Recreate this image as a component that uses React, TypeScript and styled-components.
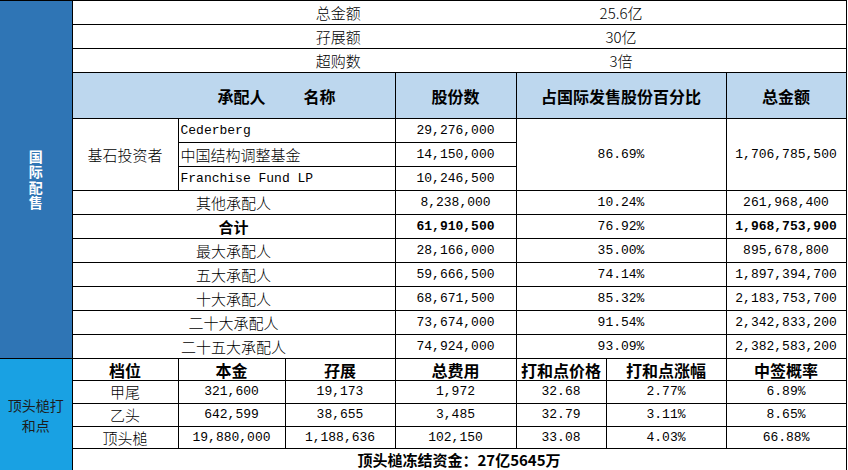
import React from "react";
import styled, { createGlobalStyle } from "styled-components";

const GlobalStyle = createGlobalStyle`
  html, body {
    margin: 0;
    padding: 0;
    background: #fff;
  }
  body {
    font-family: "Noto Sans CJK SC", "Noto Sans", sans-serif;
  }
`;

const Sheet = styled.table`
  width: 846px;
  table-layout: fixed;
  border-collapse: collapse;
  color: #000;
  font-family: "Noto Sans CJK SC", sans-serif;
  font-size: 15px;
  font-weight: 300;
`;

const Row = styled.tr<{ $h: number }>`
  height: ${(p) => p.$h}px;
`;

const Cell = styled.td<{ $left?: boolean; $bold?: boolean; $mono?: boolean }>`
  border: 1px solid #000;
  padding: 0 2px;
  text-align: ${(p) => (p.$left ? "left" : "center")};
  vertical-align: middle;
  white-space: nowrap;
  line-height: 18px;
  font-family: ${(p) =>
    p.$mono ? `"Liberation Mono", "Noto Sans CJK SC", monospace` : "inherit"};
  font-size: ${(p) => (p.$mono ? "13px" : "15px")};
  font-weight: ${(p) => (p.$bold ? 700 : "inherit")};
`;

// top summary rows have no inner vertical lines
const SummaryLabel = styled(Cell)`
  border-right: none;
  padding-left: 90px;
`;

const SummaryValue = styled(Cell)`
  border-left: none;
  border-right: none;
`;

const SummaryEnd = styled(Cell)`
  border-left: none;
`;

const HeadCell = styled.th<{ $pad?: number }>`
  border: 1px solid #000;
  background: #bdd7ee;
  padding: 0 0 0 ${(p) => p.$pad ?? 0}px;
  font-size: 16px;
  font-weight: 700;
  text-align: center;
  vertical-align: middle;
  white-space: nowrap;
`;

const HeadPair = styled.div`
  display: flex;
  justify-content: center;
  gap: 38px;
`;

const SubHead = styled(Cell)`
  font-size: 16px;
  font-weight: 700;
`;

const SideCell = styled.td<{ $tone: "dark" | "light" }>`
  border: 1px solid #000;
  border-left: none;
  padding: 0;
  background: ${(p) => (p.$tone === "dark" ? "#2f75b5" : "#19a1e3")};
  color: ${(p) => (p.$tone === "dark" ? "#fff" : "#1d1d1d")};
  text-align: center;
  vertical-align: middle;
`;

const StackLabel = styled.div`
  margin: 0 auto;
  width: 1em;
  font-size: 14px;
  line-height: 15.5px;
  font-weight: 700;
  word-break: break-all;
`;

const WrapLabel = styled.div`
  margin: 0 auto;
  width: 58px;
  font-size: 14px;
  line-height: 20px;
  font-weight: 400;
  word-break: break-all;
`;

const FootCell = styled(Cell)`
  font-size: 15px;
  font-weight: 700;
`;

const summary = [
  ["总金额", "25.6亿"],
  ["孖展额", "30亿"],
  ["超购数", "3倍"],
];

const investors = [
  ["Cederberg", "29,276,000"],
  ["中国结构调整基金", "14,150,000"],
  ["Franchise Fund LP", "10,246,500"],
];

const placees = [
  { name: "其他承配人", shares: "8,238,000", pct: "10.24%", total: "261,968,400" },
  { name: "合计", shares: "61,910,500", pct: "76.92%", total: "1,968,753,900", bold: true },
  { name: "最大承配人", shares: "28,166,000", pct: "35.00%", total: "895,678,800" },
  { name: "五大承配人", shares: "59,666,500", pct: "74.14%", total: "1,897,394,700" },
  { name: "十大承配人", shares: "68,671,500", pct: "85.32%", total: "2,183,753,700" },
  { name: "二十大承配人", shares: "73,674,000", pct: "91.54%", total: "2,342,833,200" },
  { name: "二十五大承配人", shares: "74,924,000", pct: "93.09%", total: "2,382,583,200" },
];

const tierHeads = ["档位", "本金", "孖展", "总费用", "打和点价格", "打和点涨幅", "中签概率"];

const tiers = [
  { name: "甲尾", h: 23, vals: ["321,600", "19,173", "1,972", "32.68", "2.77%", "6.89%"] },
  { name: "乙头", h: 23, vals: ["642,599", "38,655", "3,485", "32.79", "3.11%", "8.65%"] },
  { name: "顶头槌", h: 22, vals: ["19,880,000", "1,188,636", "102,150", "33.08", "4.03%", "66.88%"] },
];

const colWidths = [72, 106, 107, 110, 121, 90, 120, 120];

export default function App() {
  return (
    <>
      <GlobalStyle />
      <Sheet>
        <colgroup>
          {colWidths.map((w, i) => (
            <col key={i} style={{ width: w }} />
          ))}
        </colgroup>
        <tbody>
          {summary.map(([label, value], i) => (
            <Row $h={24} key={label}>
              {i === 0 && (
                <SideCell $tone="dark" rowSpan={14}>
                  <StackLabel>国际配售</StackLabel>
                </SideCell>
              )}
              <SummaryLabel colSpan={4}>{label}</SummaryLabel>
              <SummaryValue colSpan={2}>{value}</SummaryValue>
              <SummaryEnd />
            </Row>
          ))}

          <Row $h={46}>
            <HeadCell colSpan={3} $pad={86}>
              <HeadPair>
                <span>承配人</span>
                <span>名称</span>
              </HeadPair>
            </HeadCell>
            <HeadCell>股份数</HeadCell>
            <HeadCell colSpan={2}>占国际发售股份百分比</HeadCell>
            <HeadCell>总金额</HeadCell>
          </Row>

          {investors.map(([name, shares], i) => (
            <Row $h={24} key={name}>
              {i === 0 && <Cell rowSpan={3}>基石投资者</Cell>}
              <Cell colSpan={2} $left $mono={/^[A-Za-z]/.test(name)}>
                {name}
              </Cell>
              <Cell $mono>{shares}</Cell>
              {i === 0 && (
                <>
                  <Cell colSpan={2} rowSpan={3} $mono>
                    86.69%
                  </Cell>
                  <Cell rowSpan={3} $mono>
                    1,706,785,500
                  </Cell>
                </>
              )}
            </Row>
          ))}

          {placees.map((p) => (
            <Row $h={24} key={p.name}>
              <Cell colSpan={3} $bold={p.bold}>
                {p.name}
              </Cell>
              <Cell $mono $bold={p.bold}>
                {p.shares}
              </Cell>
              <Cell colSpan={2} $mono>
                {p.pct}
              </Cell>
              <Cell $mono $bold={p.bold}>
                {p.total}
              </Cell>
            </Row>
          ))}

          <Row $h={22}>
            <SideCell $tone="light" rowSpan={5}>
              <WrapLabel>顶头槌打和点</WrapLabel>
            </SideCell>
            {tierHeads.map((h) => (
              <SubHead key={h}>{h}</SubHead>
            ))}
          </Row>

          {tiers.map((t) => (
            <Row $h={t.h} key={t.name}>
              <Cell>{t.name}</Cell>
              {t.vals.map((v, i) => (
                <Cell $mono key={i}>
                  {v}
                </Cell>
              ))}
            </Row>
          ))}

          <Row $h={22}>
            <FootCell colSpan={7}>顶头槌冻结资金：27亿5645万</FootCell>
          </Row>
        </tbody>
      </Sheet>
    </>
  );
}
